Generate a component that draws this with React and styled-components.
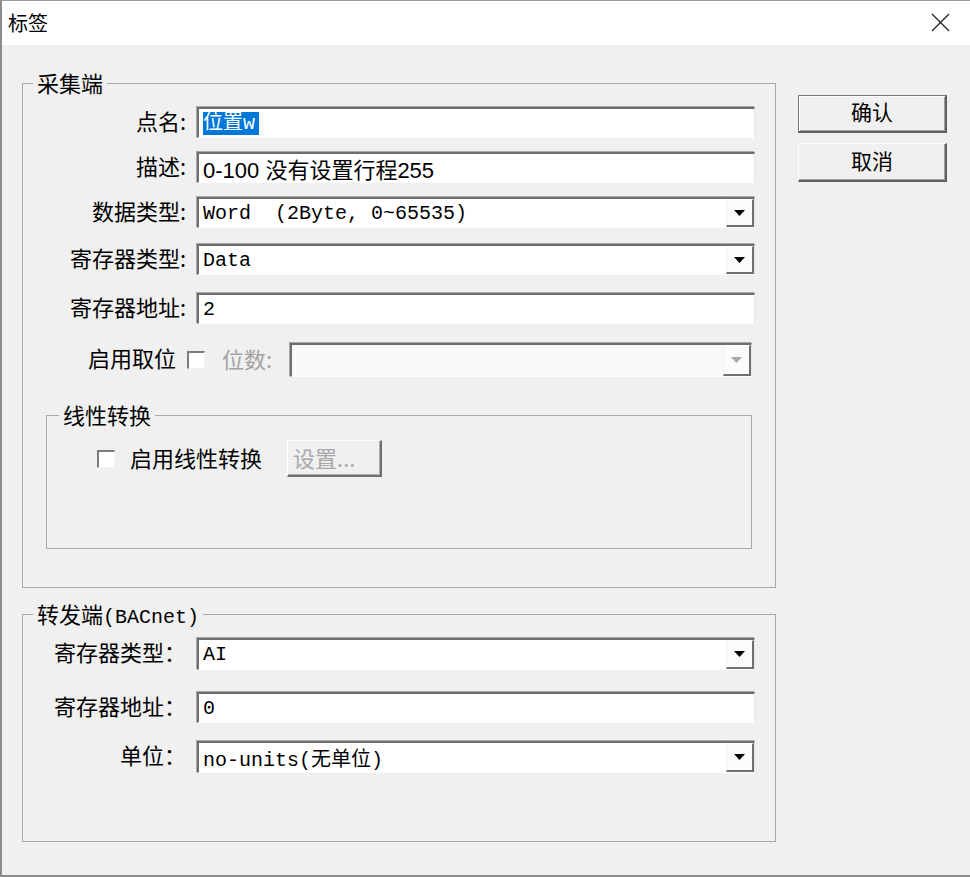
import React from 'react';
import styled, { createGlobalStyle } from 'styled-components';

const GlobalStyle = createGlobalStyle`
  html, body {
    margin: 0;
    padding: 0;
    background: #fff;
  }
  body {
    font-family: "Noto Sans CJK SC", "Liberation Sans", sans-serif;
    color: #000;
  }
`;

const Window = styled.div`
  width: 970px;
  height: 877px;
  box-sizing: border-box;
  display: flex;
  flex-direction: column;
  background: #f0f0f0;
  border-top: 1px solid #9a9a9a;
  border-left: 2px solid #8c8c8c;
  border-bottom: 2px solid #8c8c8c;
  overflow: hidden;
`;

const TitleBar = styled.div`
  height: 44px;
  flex: none;
  display: flex;
  align-items: center;
  justify-content: space-between;
  padding: 0 20px 2px 6px;
  box-sizing: border-box;
  background: #fff;
  font-size: 20px;
`;

const Body = styled.div`
  display: flex;
  align-items: flex-start;
  gap: 22px;
  padding: 26px 0 0 20px;
`;

const Main = styled.div`
  width: 754px;
  display: flex;
  flex-direction: column;
`;

const Group = styled.fieldset`
  margin: ${p => p.$mt || 0}px ${p => p.$mx || 0}px 0;
  padding: 0;
  border: 1px solid #a9a9a9;
  min-width: 0;
  box-sizing: border-box;
`;

const Legend = styled.legend`
  margin-left: ${p => p.$ml || 10}px;
  padding: 0 4px;
  height: 24px;
  line-height: 22px;
  font-size: 22px;
  white-space: nowrap;
`;

const Mono = styled.span`
  font-family: "Liberation Mono", "Noto Sans CJK SC", monospace;
  font-size: 20px;
`;

const Content = styled.div`
  display: flex;
  flex-direction: column;
  padding: ${p => p.$pt}px 0 ${p => p.$pb}px ${p => p.$pl || 0}px;
`;

const Row = styled.div`
  display: flex;
  align-items: center;
  height: ${p => p.$h || 31}px;
  margin-top: ${p => p.$mt || 0}px;
  padding-right: ${p => (p.$pr === undefined ? 20 : p.$pr)}px;
`;

const Label = styled.label`
  flex: none;
  width: ${p => p.$w || 163}px;
  margin-right: ${p => (p.$gap === undefined ? 11 : p.$gap)}px;
  padding-bottom: 6px;
  text-align: right;
  font-size: 22px;
  white-space: nowrap;
  color: ${p => (p.$disabled ? '#a3a3a3' : '#000')};
`;

const Field = styled.div`
  flex: 1;
  align-self: stretch;
  display: flex;
  align-items: center;
  box-sizing: border-box;
  background: ${p => (p.$disabled ? '#fafafa' : '#fff')};
  border-top: 2px solid #6f6f6f;
  border-left: 2px solid #6f6f6f;
  border-right: 1px solid #e6e6e6;
  border-bottom: 1px solid #fcfcfc;
  box-shadow: -1px -1px 0 #a8a8a8;
  padding-left: 4px;
  font-family: ${p =>
    p.$sans
      ? '"Liberation Sans", "Noto Sans CJK SC", sans-serif'
      : '"Liberation Mono", "Noto Sans CJK SC", monospace'};
  font-size: ${p => (p.$sans ? 22 : 20)}px;
  white-space: pre;
  overflow: hidden;
`;

const Selected = styled.span`
  background: #0078d7;
  color: #fff;
  line-height: 23px;
  padding-right: 4px;
`;

const DropButton = styled.div`
  margin-left: auto;
  width: 28px;
  align-self: stretch;
  box-sizing: border-box;
  display: flex;
  align-items: center;
  justify-content: center;
  background: #fbfbfb;
  border-left: 1px solid #f0f0f0;
  border-top: 1px solid #fff;
  border-right: 2px solid #707070;
  border-bottom: 2px solid #707070;
`;

const CheckBox = styled.span`
  flex: none;
  width: 18px;
  height: 18px;
  box-sizing: border-box;
  margin-left: ${p => p.$ml || 0}px;
  background: #fff;
  border-top: 2px solid #7c7c7c;
  border-left: 2px solid #7c7c7c;
  border-right: 1px solid #f4f4f4;
  border-bottom: 1px solid #f4f4f4;
`;

const Text = styled.span`
  flex: none;
  margin-left: ${p => p.$ml || 0}px;
  margin-right: ${p => p.$mr || 0}px;
  padding-bottom: 4px;
  font-size: 22px;
  white-space: nowrap;
  color: ${p => (p.$disabled ? '#a3a3a3' : '#000')};
`;

const SmallButton = styled.div`
  flex: none;
  width: 95px;
  height: 37px;
  box-sizing: border-box;
  display: flex;
  align-items: center;
  padding: 0 0 3px 5px;
  font-size: 22px;
  color: #a8a8a8;
  background: #f0f0f0;
  border-top: 1px solid #fff;
  border-left: 1px solid #fff;
  border-right: 2px solid #6f6f6f;
  border-bottom: 2px solid #6f6f6f;
  box-shadow: inset -1px -1px 0 #b0b0b0;
`;

const Buttons = styled.div`
  width: 149px;
  margin-top: 24px;
  display: flex;
  flex-direction: column;
  gap: 10px;
`;

const Button = styled.div`
  height: ${p => p.$h || 38}px;
  box-sizing: border-box;
  display: flex;
  align-items: center;
  justify-content: center;
  padding-bottom: 5px;
  font-size: 21px;
  background: #f0f0f0;
  border-top: 1px solid ${p => (p.$default ? '#777' : '#fff')};
  border-left: 1px solid ${p => (p.$default ? '#777' : '#fff')};
  border-right: 2px solid #5f5f5f;
  border-bottom: 2px solid #5f5f5f;
  box-shadow: ${p =>
    p.$default
      ? 'inset 1px 1px 0 #fff, inset -1px -1px 0 #a0a0a0'
      : 'inset -1px -1px 0 #a0a0a0'};
`;

function Arrow({ color = '#000' }) {
  return (
    <svg width="11" height="6" viewBox="0 0 11 6">
      <polygon points="0,0 11,0 5.5,6" fill={color} />
    </svg>
  );
}

function CloseIcon() {
  return (
    <svg width="19" height="19" viewBox="0 0 19 19">
      <path d="M1 1 L18 18 M18 1 L1 18" stroke="#222" strokeWidth="1.3" fill="none" />
    </svg>
  );
}

function Select({ value, disabled }) {
  return (
    <Field $disabled={disabled}>
      {value}
      <DropButton>
        <Arrow color={disabled ? '#a8a8a8' : '#000'} />
      </DropButton>
    </Field>
  );
}

export default function App() {
  return (
    <>
      <GlobalStyle />
      <Window>
        <TitleBar>
          <span>标签</span>
          <CloseIcon />
        </TitleBar>
        <Body>
          <Main>
            <Group>
              <Legend>采集端</Legend>
              <Content $pt={12} $pb={38}>
                <Row>
                  <Label>点名:</Label>
                  <Field>
                    <Selected>位置w</Selected>
                  </Field>
                </Row>
                <Row $mt={14}>
                  <Label>描述:</Label>
                  <Field $sans>0-100 没有设置行程255</Field>
                </Row>
                <Row $mt={14}>
                  <Label>数据类型:</Label>
                  <Select value="Word  (2Byte, 0~65535)" />
                </Row>
                <Row $mt={16}>
                  <Label>寄存器类型:</Label>
                  <Select value="Data" />
                </Row>
                <Row $mt={18}>
                  <Label>寄存器地址:</Label>
                  <Field>2</Field>
                </Row>
                <Row $mt={19} $h={34} $pr={23}>
                  <Label $w={153} $gap={0}>启用取位</Label>
                  <CheckBox $ml={11} />
                  <Text $ml={17} $mr={18} $disabled>位数:</Text>
                  <Select value="" disabled />
                </Row>
                <Group $mt={26} $mx={23}>
                  <Legend $ml={12}>线性转换</Legend>
                  <Content $pt={13} $pb={71} $pl={50}>
                    <Row $h={37} $pr={0}>
                      <CheckBox />
                      <Text $ml={15} $mr={25}>启用线性转换</Text>
                      <SmallButton>设置...</SmallButton>
                    </Row>
                  </Content>
                </Group>
              </Content>
            </Group>
            <Group $mt={14}>
              <Legend>
                转发端<Mono>(BACnet)</Mono>
              </Legend>
              <Content $pt={12} $pb={68}>
                <Row $h={32}>
                  <Label>寄存器类型：</Label>
                  <Select value="AI" />
                </Row>
                <Row $mt={22}>
                  <Label>寄存器地址：</Label>
                  <Field>0</Field>
                </Row>
                <Row $mt={18} $h={32}>
                  <Label>单位：</Label>
                  <Select value="no-units(无单位)" />
                </Row>
              </Content>
            </Group>
          </Main>
          <Buttons>
            <Button $default>确认</Button>
            <Button $h={39}>取消</Button>
          </Buttons>
        </Body>
      </Window>
    </>
  );
}
